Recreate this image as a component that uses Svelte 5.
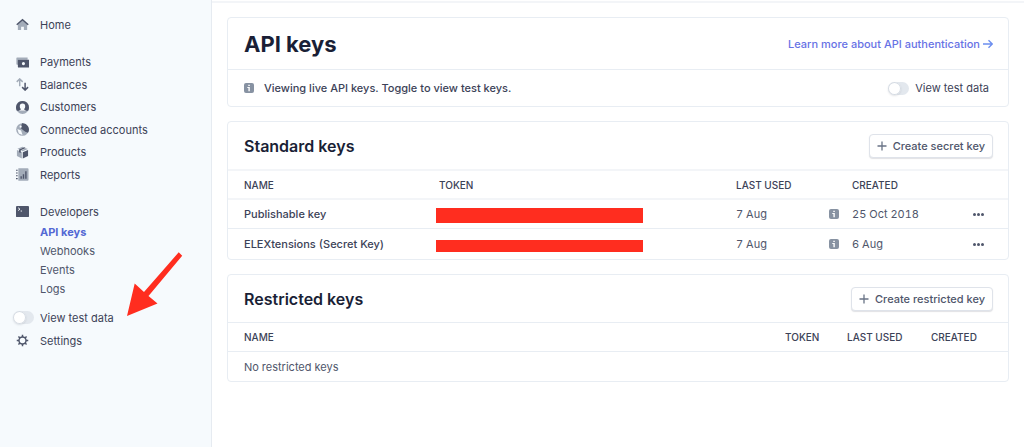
<script lang="ts">
  let testData = $state(false);

  const mainNav = [
    { label: 'Payments', icon: 'payments' },
    { label: 'Balances', icon: 'balances' },
    { label: 'Customers', icon: 'customers' },
    { label: 'Connected accounts', icon: 'connected' },
    { label: 'Products', icon: 'products' },
    { label: 'Reports', icon: 'reports' },
  ];

  const devNav = ['API keys', 'Webhooks', 'Events', 'Logs'];

  const keys = [
    { name: 'Publishable key', lastUsed: '7 Aug', created: '25 Oct 2018' },
    { name: 'ELEXtensions (Secret Key)', lastUsed: '7 Aug', created: '6 Aug' },
  ];
</script>

{#snippet icon(name: string)}
  <svg class="icon" viewBox="0 0 14 14" aria-hidden="true">
    {#if name === 'home'}
      <path class="light" d="M2 6.500 7 2.500l5 4V13H8.500V9.500h-3V13H2z" />
      <path class="stroke" d="M.8 7.200 7 1.800l6.200 5.400" />
    {:else if name === 'payments'}
      <path class="light" d="M1 1.500h11.500V4H2.800v5.500H1.200A.8.8 0 0 1 .4 8.700V2.100z" />
      <path fill-rule="evenodd" d="M2.800 4H14v8.500H3a1 1 0 0 1-1-1V4.800A.8.8 0 0 1 2.800 4zM8 6.500a1.700 1.700 0 1 0 0 3.400 1.700 1.700 0 0 0 0-3.400z" />
    {:else if name === 'balances'}
      <path class="stroke light-stroke" d="M4 9V1.200M.8 4.200 4 1l3.200 3.200" />
      <path class="stroke" d="M9.800 5v7.800M6.600 9.800l3.200 3.200L13 9.800" />
    {:else if name === 'customers'}
      <circle class="light" cx="7" cy="7" r="7" />
      <path d="M7 0a7 7 0 0 1 6.100 10.400H.9A7 7 0 0 1 7 0z" />
      <path class="paper" d="M7 2.800a2.900 2.900 0 0 1 2.900 3c0 1.300-.5 2.200-1.300 2.800.1.800 1 1 2.400 1.800H3c1.400-.8 2.300-1 2.400-1.800-.8-.6-1.300-1.500-1.300-2.800a2.900 2.900 0 0 1 2.900-3z" />
    {:else if name === 'connected'}
      <circle class="light" cx="7" cy="7" r="6.800" />
      <path class="paper" d="M1.500 6.500 5.500 8l1.500 4.800-4-1.500z" />
      <path d="M6.500.2A6.800 6.800 0 0 1 12.900 10.500L10 9.500 7.500 7.500 5 5.500z" />
      <circle class="paper" cx="5" cy="4" r="1.200" />
    {:else if name === 'products'}
      <path class="light" d="M1 4.200 6.300 6.500v7L1 10.800zM1.500 3 7 .8l1.500.6L3.300 3.900zM5.300 4.800 10.600 2.300l2.200 1-5.500 2.400z" />
      <path d="M7.300 6.700 13 4.200v6.700l-5.700 2.600zM3.300 3.900 8.800 1.400l1.700.8-5.400 2.500v2.900l-1.800-.8z" />
    {:else if name === 'reports'}
      <path class="light" d="M2.500.3h10a1 1 0 0 1 1 1v11.400a1 1 0 0 1-1 1h-10z" />
      <path d="M0 1.800h1.800V3H0zM0 4.800h1.800V6H0zM0 7.800h1.800V9H0zM0 10.800h1.800V12H0z" />
      <path d="M4.800 9h1.500v2.500H4.800zM7.300 6.800h1.500v4.700H7.300zM9.900 3.600h1.500v7.900H9.900z" />
    {:else if name === 'developers'}
      <rect y="1" width="14" height="12" rx="1" />
      <path class="prompt" d="M2.300 3 4.300 4.500l-2 1.500M5 6.500h1.500" />
    {:else if name === 'settings'}
      <circle class="stroke" cx="7" cy="7" r="3.800" />
      <path class="stroke" d="M7 3.200V.8M7 13.200v-2.400M3.200 7H.8M13.200 7h-2.400M4.300 4.300 2.600 2.600M11.400 11.400 9.700 9.700M4.300 9.700l-1.700 1.700M11.400 2.600 9.700 4.300" />
    {/if}
  </svg>
{/snippet}

{#snippet info()}
  <svg class="info" viewBox="0 0 10 10" role="img" aria-label="Info">
    <rect width="10" height="10" rx="2" />
    <path d="M4.300 1.700h1.500V3H4.300zM3.300 4h2.500v4.200H4.400V5.100H3.300z" />
  </svg>
{/snippet}

{#snippet plus()}
  <svg class="plus" viewBox="0 0 10 10" aria-hidden="true">
    <path d="M5 .5v9M.5 5h9" />
  </svg>
{/snippet}

<div class="app">
  <aside class="sidebar">
    <nav>
      <a class="item" href="#home">{@render icon('home')}Home</a>

      <div class="group">
        {#each mainNav as item}
          <a class="item" href="#{item.icon}">{@render icon(item.icon)}{item.label}</a>
        {/each}
      </div>

      <a class="item" href="#developers">{@render icon('developers')}Developers</a>
      <div class="sub">
        {#each devNav as label, i}
          <a class:active={i === 0} href="#dev-{i}">{label}</a>
        {/each}
      </div>

      <label class="item toggle-item">
        <input class="toggle" type="checkbox" bind:checked={testData} />
        View test data
      </label>
      <a class="item" href="#settings">{@render icon('settings')}Settings</a>
    </nav>

    <svg class="pointer" viewBox="0 0 56 64" aria-hidden="true">
      <path d="M51.700.3 55.200 3.700 21.500 43.900 30.500 51.500 0 64 7.700 31.500 17 40z" />
    </svg>
  </aside>

  <main>
    <section class="card">
      <header class="title">
        <h1>API keys</h1>
        <a class="learn" href="#docs">
          Learn more about API authentication
          <svg viewBox="0 0 10 10" aria-hidden="true"><path d="M0 5h9M5.500 1.200 9.300 5 5.500 8.800" /></svg>
        </a>
      </header>
      <div class="notice">
        {@render info()}
        <p>Viewing live API keys. Toggle to view test keys.</p>
        <label>
          <input class="toggle" type="checkbox" bind:checked={testData} />
          View test data
        </label>
      </div>
    </section>

    <section class="card">
      <header>
        <h2>Standard keys</h2>
        <button type="button">{@render plus()}Create secret key</button>
      </header>
      <table class="standard">
        <thead>
          <tr>
            <th class="name">Name</th>
            <th>Token</th>
            <th class="used">Last used</th>
            <th class="hint"></th>
            <th class="created">Created</th>
            <th class="more"></th>
          </tr>
        </thead>
        <tbody>
          {#each keys as key}
            <tr>
              <td class="strong">{key.name}</td>
              <td><span class="redacted"></span></td>
              <td>{key.lastUsed}</td>
              <td>{@render info()}</td>
              <td>{key.created}</td>
              <td>
                <button class="dots" type="button" aria-label="More options">
                  <svg viewBox="0 0 11 3"><circle cx="1.500" cy="1.500" r="1.500" /><circle cx="5.500" cy="1.500" r="1.500" /><circle cx="9.500" cy="1.500" r="1.500" /></svg>
                </button>
              </td>
            </tr>
          {/each}
        </tbody>
      </table>
    </section>

    <section class="card">
      <header>
        <h2>Restricted keys</h2>
        <button type="button">{@render plus()}Create restricted key</button>
      </header>
      <table class="restricted">
        <thead>
          <tr>
            <th>Name</th>
            <th class="r-token">Token</th>
            <th class="r-used">Last used</th>
            <th class="r-created">Created</th>
          </tr>
        </thead>
        <tbody>
          <tr><td colspan="4">No restricted keys</td></tr>
        </tbody>
      </table>
    </section>
  </main>
</div>

<style>
  :global(body) {
    background: #fff;
  }

  .app {
    display: flex;
    min-height: 100vh;
    font: 11px/16px Inter, 'Liberation Sans', sans-serif;
    color: #3c4257;
  }
  .app * {
    box-sizing: border-box;
  }
  a {
    color: inherit;
    text-decoration: none;
  }

  .sidebar {
    position: relative;
    flex: 0 0 212px;
    padding: 13px 16px;
    background: #f6fafd;
    border-right: 1px solid #e6ebf1;
  }
  .item {
    display: flex;
    align-items: center;
    gap: 11px;
    height: 23px;
  }
  .group {
    display: grid;
    grid-auto-rows: 1fr;
    height: 135px;
    margin: 15px 0 14px;
  }
  .group .item {
    height: auto;
  }
  .sub {
    display: grid;
    padding-left: 24px;
    margin-bottom: 7px;
    color: #4f566b;
  }
  .sub a {
    line-height: 19px;
  }
  .sub .active {
    color: #5469d4;
    font-weight: 700;
  }
  .toggle-item {
    margin-left: -3px;
    gap: 6px;
  }

  .icon {
    width: 13px;
    height: 13px;
    fill: #4f566b;
  }
  .light { fill: #a3acb9; }
  .paper { fill: #f6fafd; }
  .stroke {
    fill: none;
    stroke: #4f566b;
    stroke-width: 1.6;
  }
  .light-stroke { stroke: #a3acb9; }
  .prompt {
    fill: none;
    stroke: #f6fafd;
  }

  .pointer {
    position: absolute;
    left: 127px;
    top: 252px;
    width: 56px;
    height: 64px;
    fill: #ff2d1f;
  }

  .toggle {
    appearance: none;
    flex: none;
    width: 21px;
    height: 13px;
    margin: 0;
    border-radius: 7px;
    background: #e3e8ee;
  }
  .toggle::before {
    content: '';
    display: block;
    width: 13px;
    height: 13px;
    border-radius: 50%;
    background: #fff;
    box-shadow: inset 0 0 0 1px #d5dbe3, 0 1px 2px rgba(60, 66, 87, 0.15);
  }
  .toggle:checked {
    background: #f5a623;
  }
  .toggle:checked::before {
    margin-left: 8px;
  }

  main {
    flex: 1;
    min-width: 0;
    display: flex;
    flex-direction: column;
    gap: 14px;
    margin-top: 1px;
    padding: 14px 15px 16px;
    border-top: 2px solid #f3f5f8;
  }
  .card {
    border: 1px solid #e8edf3;
    border-radius: 4px;
  }
  header {
    display: flex;
    align-items: center;
    justify-content: space-between;
    height: 47px;
    padding: 0 15px 0 16px;
  }
  .title {
    height: 51px;
  }
  h1, h2, p {
    margin: 0;
  }
  h1 {
    font-size: 22px;
    line-height: 28px;
    font-weight: 700;
    color: #1a1f36;
  }
  h2 {
    font-size: 16px;
    line-height: 20px;
    font-weight: 600;
    color: #1a1f36;
  }
  .learn {
    display: flex;
    align-items: center;
    gap: 3px;
    font-weight: 500;
    color: #6772e5;
  }
  .learn svg {
    width: 10px;
    height: 10px;
    fill: none;
    stroke: #6c8eef;
    stroke-width: 1.4;
  }

  .notice {
    display: flex;
    align-items: center;
    gap: 10px;
    height: 37px;
    padding: 0 19px 0 16px;
    border-top: 1px solid #e8edf3;
  }
  .notice p {
    flex: 1;
    font-weight: 500;
  }
  .notice label {
    display: flex;
    align-items: center;
    gap: 6px;
  }

  .info {
    display: block;
    width: 10px;
    height: 10px;
    fill: #8792a2;
  }
  .info path { fill: #fff; }

  header button {
    display: flex;
    align-items: center;
    gap: 6px;
    height: 24px;
    padding: 0 7px;
    border: 1px solid #dfe3ea;
    border-radius: 4px;
    background: #fff;
    box-shadow: 0 1px 1px rgba(60, 66, 87, 0.16);
    font: inherit;
    font-weight: 500;
    color: #4f566b;
  }
  .plus {
    width: 10px;
    height: 10px;
    stroke: #697386;
    stroke-width: 1.3;
  }

  table {
    width: 100%;
    table-layout: fixed;
    border-spacing: 0;
    font-variant-numeric: tabular-nums;
  }
  th, td {
    height: 30px;
    padding: 0 0 0 8px;
    border-top: 1px solid #e8edf3;
    text-align: left;
    color: #4f566b;
  }
  th {
    height: 29px;
    font-size: 10px;
    font-weight: 500;
    text-transform: uppercase;
    color: #3c4257;
  }
  th:first-child, td:first-child {
    padding-left: 16px;
  }
  .standard th, .standard tr:first-child td {
    border-top: 2px solid #f3f5f8;
  }
  .standard tr:last-child td {
    height: 31px;
  }
  td.strong {
    font-weight: 500;
    color: #3c4257;
  }
  .name { width: 203px; }
  .used { width: 93px; }
  .hint { width: 23px; }
  .created { width: 121px; }
  .more { width: 43px; }
  .r-token { width: 62px; }
  .r-used { width: 84px; }
  .r-created { width: 85px; }

  .redacted {
    display: block;
    width: 207px;
    height: 15px;
    margin: 3px 0 0 -3px;
    background: #ff2d1f;
  }
  tr:last-child .redacted {
    height: 12px;
  }

  .dots {
    display: block;
    padding: 0;
    border: 0;
    background: none;
  }
  .dots svg {
    display: block;
    width: 11px;
    height: 3px;
    fill: #4f566b;
  }
</style>
